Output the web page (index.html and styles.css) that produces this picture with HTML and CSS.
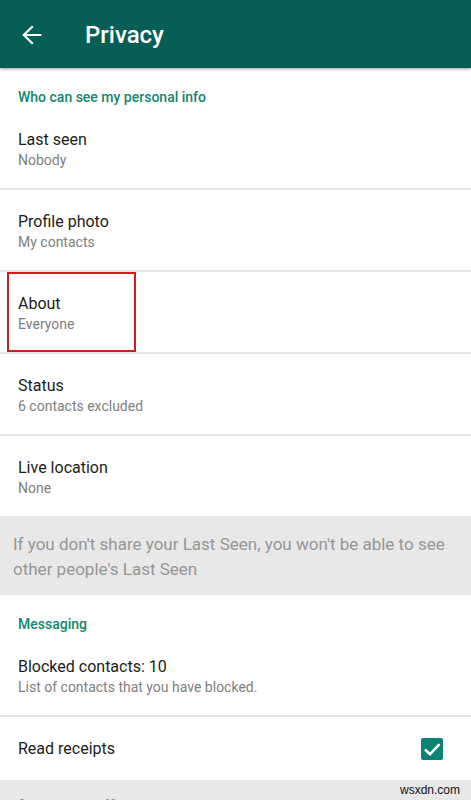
FILE: index.html
```
<!DOCTYPE html>
<html lang="en">
<head>
<meta charset="utf-8">
<meta name="viewport" content="width=device-width, initial-scale=1">
<title>Privacy</title>
<link rel="stylesheet" href="styles.css">
</head>
<body>
<div class="screen">
  <header class="app-bar">
    <button class="back" type="button" aria-label="Back">
      <svg viewBox="0 0 20 20" width="20" height="20" aria-hidden="true"><path d="M19.500 10H1.800M10.700 1.200L1.800 10l8.900 8.800"/></svg>
    </button>
    <h1>Privacy</h1>
  </header>
  <main>
    <section>
      <h2>Who can see my personal info</h2>
      <button class="row" type="button"><span class="title">Last seen</span><span class="value">Nobody</span></button>
      <button class="row" type="button"><span class="title">Profile photo</span><span class="value">My contacts</span></button>
      <button class="row marked" type="button"><span class="title">About</span><span class="value">Everyone</span></button>
      <button class="row" type="button"><span class="title">Status</span><span class="value">6 contacts excluded</span></button>
      <button class="row" type="button"><span class="title">Live location</span><span class="value">None</span></button>
      <p class="note">If you don't share your Last Seen, you won't be able to see other people's Last Seen</p>
    </section>
    <section>
      <h2>Messaging</h2>
      <button class="row" type="button"><span class="title">Blocked contacts: 10</span><span class="value">List of contacts that you have blocked.</span></button>
      <div class="check-row">
        <label class="title" for="receipts">Read receipts</label>
        <span class="check">
          <input id="receipts" type="checkbox" checked>
          <svg viewBox="0 0 22 22" width="22" height="22" aria-hidden="true"><path d="M4 11.500l5 4.700 9.500-10"/></svg>
        </span>
      </div>
      <p class="note">If you turn off read receipts, you won't be able to see read</p>
    </section>
  </main>
  <span class="watermark">wsxdn.com</span>
</div>
</body>
</html>
```
FILE: styles.css
```
*,
*::after { box-sizing: border-box; }

body {
  margin: 0;
  background: #fff;
  color: #1c1c1c;
  font-family: Roboto, "Liberation Sans", sans-serif;
}

.screen {
  position: relative;
  height: 100vh;
  overflow: hidden;
}

.app-bar {
  display: flex;
  align-items: center;
  gap: 43px;
  height: 68px;
  padding: 1px 22px 0;
  background: #075e54;
  box-shadow: 0 1px 3px rgba(0, 0, 0, 0.4);
}

.back {
  display: flex;
  padding: 0;
  border: 0;
  background: none;
}

.back svg {
  fill: none;
  stroke: #fff;
  stroke-width: 2.2;
}

h1 {
  margin: 0;
  color: #fff;
  font-size: 24px;
  font-weight: 500;
  line-height: 28px;
}

h2 {
  margin: 0;
  padding: 19px 18px 1px;
  color: #128670;
  font-size: 14px;
  font-weight: 500;
  line-height: 20px;
}

.row {
  display: flex;
  flex-direction: column;
  width: 100%;
  height: 82px;
  padding: 21px 18px 0;
  border: 0;
  border-bottom: 2px solid #e6e6e6;
  background: none;
  font-family: inherit;
  text-align: left;
}

.title {
  color: #1c1c1c;
  font-size: 16px;
  line-height: 22px;
}

.value {
  color: #808080;
  font-size: 14px;
  line-height: 18px;
}

.marked { position: relative; }

.marked::after {
  content: "";
  position: absolute;
  top: 0;
  bottom: 0;
  left: 7px;
  width: 129px;
  border: 2px solid #d01c1f;
}

.note {
  margin: 0;
  padding: 14px 13px;
  background: #e8e8e8;
  color: #969696;
  font-size: 17px;
  line-height: 25px;
}

.row + .note { padding-bottom: 13px; }

.check-row {
  display: flex;
  align-items: center;
  justify-content: space-between;
  height: 63px;
  padding: 0 28px 0 18px;
}

.check {
  display: grid;
}

.check input,
.check svg {
  grid-area: 1 / 1;
}

.check input {
  appearance: none;
  width: 22px;
  height: 22px;
  margin: 0;
  border-radius: 2px;
  background: #0b8374;
}

.check svg {
  fill: none;
  stroke: #fff;
  stroke-width: 2.5;
  pointer-events: none;
}

.watermark {
  position: absolute;
  right: 11px;
  bottom: 2px;
  color: #111;
  font-family: "Liberation Sans", sans-serif;
  font-size: 12px;
  line-height: 16px;
}
```
